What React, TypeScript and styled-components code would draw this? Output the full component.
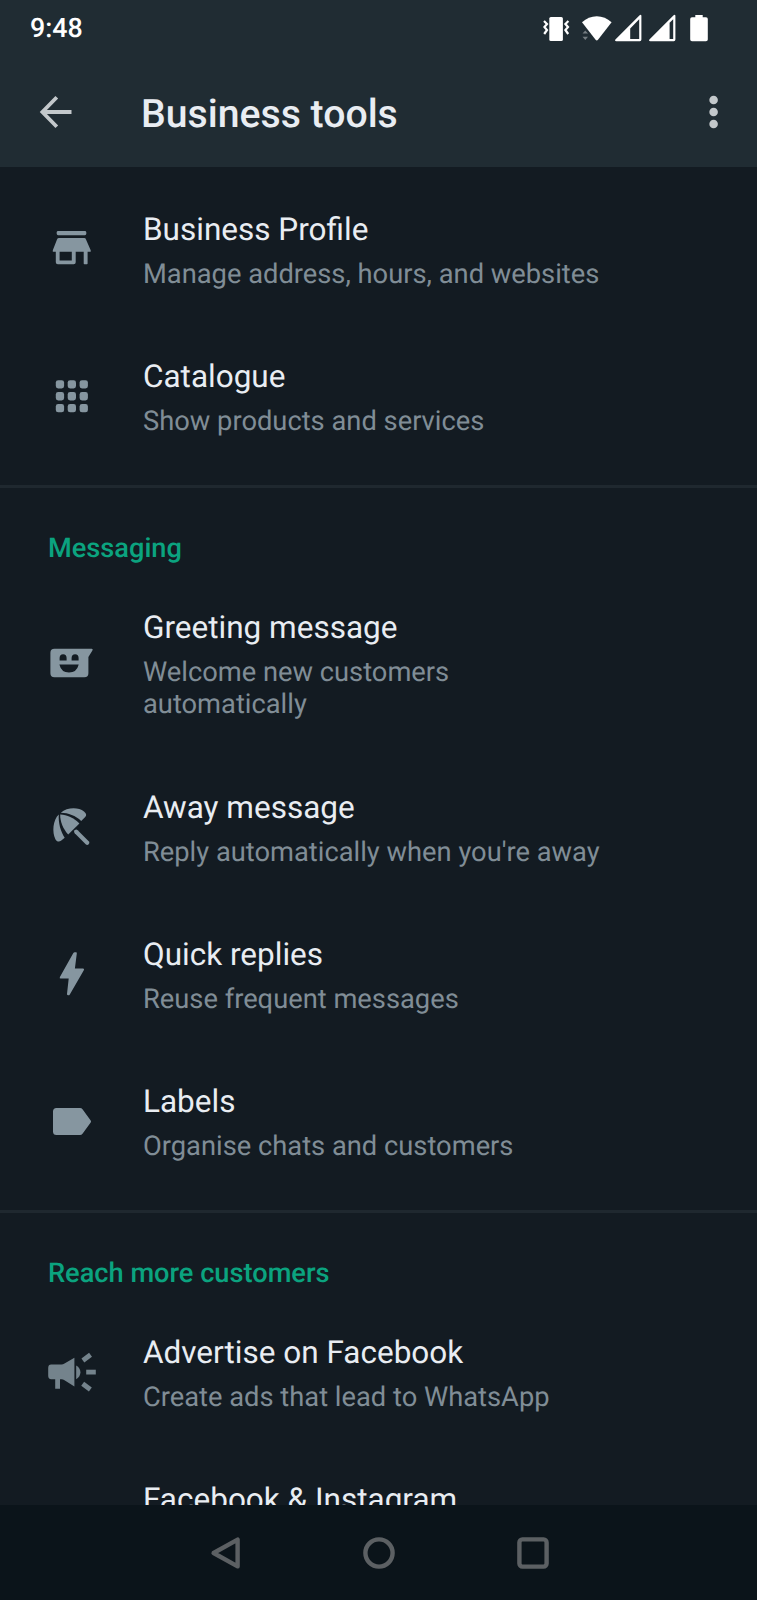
import React from "react";
import styled, { createGlobalStyle } from "styled-components";

const GlobalStyle = createGlobalStyle`
  * { box-sizing: border-box; }
  html, body { margin: 0; padding: 0; background: #131b22; }
  body {
    font-family: Roboto, "Noto Sans", sans-serif;
    text-rendering: geometricPrecision;
    overflow: hidden;
  }
`;

const Screen = styled.div`
  display: flex;
  flex-direction: column;
  width: 757px;
  height: 1600px;
  background: #131b22;
  overflow: hidden;
`;

const Header = styled.header`
  flex: none;
  height: 167px;
  background: #202c33;
`;

const StatusBar = styled.div`
  display: flex;
  justify-content: space-between;
  align-items: center;
  height: 56px;
  padding: 0 49px 0 30px;
`;

const Clock = styled.span`
  color: #fff;
  font-size: 26.8px;
  font-weight: 500;
  line-height: 56px;
`;

const StatusIcons = styled.div`
  display: flex;
  align-items: center;
`;

const StatusGlyph = styled.svg<{ $gap?: number }>`
  display: block;
  height: 28px;
  margin-left: ${(p) => p.$gap ?? 0}px;
  fill: #fff;
`;

const Toolbar = styled.div`
  display: flex;
  align-items: center;
  height: 111px;
  padding: 0 35px 0 38px;
`;

const ToolbarIcon = styled.svg`
  display: block;
  flex: none;
  fill: none;
  stroke: #c3c8cb;
`;

const Title = styled.h1`
  flex: 1;
  margin: 5px 0 0 68px;
  color: #e9edf2;
  font-size: 39.2px;
  font-weight: 500;
  line-height: 46px;
`;

const List = styled.main`
  flex: 1;
  min-height: 0;
  overflow: hidden;
`;

const Section = styled.section`
  padding: 8.5px 0 14.8px;
  & + & {
    border-top: 3px solid #1f282f;
    padding-top: 41px;
  }
`;

const SectionTitle = styled.h2`
  margin: 0 0 6.2px 48px;
  color: #0ba37f;
  font-size: 27.2px;
  font-weight: 500;
  line-height: 38px;
`;

const Row = styled.div`
  display: flex;
  align-items: center;
  padding: 35.5px 46px 32.5px 45.6px;
`;

const RowIcon = styled.svg`
  display: block;
  flex: none;
  width: 52px;
  height: 48px;
  margin-bottom: 3px;
  fill: #8696a0;
`;

const RowText = styled.div`
  align-self: flex-start;
  width: 470px;
  margin-left: 43.4px;
  padding-left: 2px;
`;

const RowTitle = styled.div`
  color: #e9edf2;
  font-size: 31.5px;
  line-height: 38px;
  white-space: nowrap;
`;

const RowDetail = styled.div`
  margin-top: 9px;
  color: #808d96;
  font-size: 27.3px;
  line-height: 32.4px;
`;

const NavBar = styled.nav`
  display: flex;
  flex: none;
  justify-content: center;
  align-items: center;
  gap: 114px;
  height: 95px;
  background: #0b141a;
`;

const NavIcon = styled.svg`
  display: block;
  width: 40px;
  height: 40px;
  fill: none;
  stroke: #5c6063;
  stroke-width: 4.4;
  stroke-linejoin: round;
`;

const StoreIcon = () => (
  <RowIcon viewBox="0 0 52 48">
    <rect x="10.7" y="6" width="29.6" height="4.2" rx="1.4" />
    <path d="M13 13H38.2Q39.6 13 40 14.4L44.7 25.2V26.8H41.6V38.6Q41.6 39.3 40.9 39.3H38.4Q37.7 39.3 37.7 38.6V26.8H29.7V37.3Q29.7 39.3 27.7 39.3H11.8Q9.8 39.3 9.8 37.3V26.8H6.8V25.2L11 14.4Q11.5 13 13 13ZM13.6 26.8V35.4H25.8V26.8Z" />
  </RowIcon>
);

const GridIcon = () => (
  <RowIcon viewBox="0 0 52 48">
    {[7.2, 19.1, 31].map((y) =>
      [9.8, 21.7, 33.6].map((x) => (
        <rect key={`${x}-${y}`} x={x} y={y} width="8.3" height="8.3" rx="2.4" />
      ))
    )}
  </RowIcon>
);

const GreetingIcon = () => (
  <RowIcon viewBox="0 0 52 48">
    <path
      fillRule="evenodd"
      d="M8.4 9.7H45.7Q47.4 9.9 46.4 11.6L42.4 18V34.3Q42.4 38.3 38.4 38.3H8.4Q4.4 38.3 4.4 34.3V13.7Q4.4 9.7 8.4 9.7ZM13.6 21.4H20.6V19Q20.6 15.2 17.1 15.2Q13.6 15.2 13.6 19ZM25.6 21.4H32.6V19Q32.6 15.2 29.1 15.2Q25.6 15.2 25.6 19ZM13.4 25.6Q15.2 33.6 23 33.6Q30.8 33.6 32.7 25.6Z"
    />
  </RowIcon>
);

const UmbrellaIcon = () => (
  <RowIcon viewBox="0 0 52 48">
    <path d="M12.8 11.6C6.8 17 6 29.5 9.4 36.2C10.6 38.8 13.2 39.2 15 37.8L18.7 34.8C14.6 28.5 12.2 20 12.8 11.6Z" />
    <path d="M14.2 11.4C20.5 11.3 28 14.8 33.4 20.4L22.2 31.4C17.2 26 14 18.5 14.2 11.4Z" />
    <path d="M14.8 9.8C21 4 32.5 4 38 8.4C40.4 10.2 40.8 12.4 39.2 13.9L35.2 18C29.8 12.8 22.2 9.8 14.8 9.8Z" />
    <path d="M30.2 28.7L41.2 39.7" stroke="#8696a0" strokeWidth="4.2" strokeLinecap="round" />
  </RowIcon>
);

const BoltIcon = () => (
  <RowIcon viewBox="0 0 52 48">
    <path d="M28.8 2.3H30Q31 2.3 30.8 3.6L28.9 18.6H37Q38.7 18.6 37.8 20.3L23.8 44.4Q23.3 45.3 22.3 45.3Q20.9 45.3 21 44L22.7 28.6H14.7Q13.2 28.6 13.9 27L27.2 3.3Q27.8 2.3 28.8 2.3Z" />
  </RowIcon>
);

const LabelIcon = () => (
  <RowIcon viewBox="0 0 52 48">
    <path d="M10.5 10H34Q35.6 10 36.5 11.3L44.7 22.4Q45.4 23.5 44.7 24.6L36.5 35.7Q35.6 37 34 37H10.5Q7 37 7 33.5V13.5Q7 10 10.5 10Z" />
  </RowIcon>
);

const MegaphoneIcon = () => (
  <RowIcon viewBox="0 0 52 48">
    <g fill="#74838c">
      <path d="M5.2 16.5H15.5Q17 16.5 18.5 15.6L28.4 9.8V38.4L18.5 32.2Q17 31.2 15.5 31.2H14V40.7H9.2V31.2H5.2Q2.2 31.2 2.2 27.8V19.9Q2.2 16.5 5.2 16.5Z" />
      <path d="M30.2 17.6Q34.4 20 34.4 24.3Q34.4 28.6 30.2 31.2Z" />
      <rect x="35.8" y="7.3" width="9.6" height="4.8" transform="rotate(-37 40.5 9.5)" />
      <rect x="40.2" y="21.7" width="9.6" height="4.8" />
      <rect x="35.8" y="36.2" width="9.6" height="4.8" transform="rotate(37 40.5 38.5)" />
    </g>
  </RowIcon>
);

type Item = { title: string; detail?: string; Icon?: React.FC };

const sections: { heading?: string; items: Item[] }[] = [
  {
    items: [
      { title: "Business Profile", detail: "Manage address, hours, and websites", Icon: StoreIcon },
      { title: "Catalogue", detail: "Show products and services", Icon: GridIcon },
    ],
  },
  {
    heading: "Messaging",
    items: [
      { title: "Greeting message", detail: "Welcome new customers automatically", Icon: GreetingIcon },
      { title: "Away message", detail: "Reply automatically when you're away", Icon: UmbrellaIcon },
      { title: "Quick replies", detail: "Reuse frequent messages", Icon: BoltIcon },
      { title: "Labels", detail: "Organise chats and customers", Icon: LabelIcon },
    ],
  },
  {
    heading: "Reach more customers",
    items: [
      { title: "Advertise on Facebook", detail: "Create ads that lead to WhatsApp", Icon: MegaphoneIcon },
      { title: "Facebook & Instagram" },
    ],
  },
];

const EmptyIcon = () => <RowIcon viewBox="0 0 52 48" />;

export default function App() {
  return (
    <Screen>
      <GlobalStyle />
      <Header>
        <StatusBar>
          <Clock>9:48</Clock>
          <StatusIcons>
            <StatusGlyph width="27" viewBox="0 0 27 28">
              <rect x="6.3" y="3" width="13.6" height="24" rx="1.6" />
              <path
                d="M1 7L4 10L1.4 13L4 16L1.2 20M25.4 7L22.4 10L25 13L22.4 16L25.2 20"
                fill="none"
                stroke="#fff"
                strokeWidth="2.2"
              />
            </StatusGlyph>
            <StatusGlyph $gap={12} width="30" viewBox="0 0 30 28">
              <path d="M0 8.3Q6.5 2.2 14.8 2.2Q23 2.2 29.6 8.3L16 25.7Q14.8 27.2 13.6 25.7Z" />
              <path d="M.5 19.6L3.3 16.5L6 19.6ZM.5 22.8H6L3.3 26Z" fill="#747c81" />
            </StatusGlyph>
            <StatusGlyph $gap={3} width="27" viewBox="0 0 27 28">
              <path fillRule="evenodd" d="M.4 25.6L24.6 1.2Q26.4 .2 26.4 2V25.6Q26.4 27.2 24.8 27.2H1.4Q-.6 27 .4 25.6ZM15.2 14.6V25H24.2V5.2Z" />
            </StatusGlyph>
            <StatusGlyph $gap={7} width="27" viewBox="0 0 27 28">
              <path fillRule="evenodd" d="M.4 25.6L24.6 1.2Q26.4 .2 26.4 2V25.6Q26.4 27.2 24.8 27.2H1.4Q-.6 27 .4 25.6ZM20.6 8.8V25H24.2V5.2Z" />
            </StatusGlyph>
            <StatusGlyph $gap={14} width="18" viewBox="0 0 18 28">
              <path d="M5.3 1H12.7V3.2H16Q17.8 3.2 17.8 5V25.4Q17.8 27.2 16 27.2H2Q.2 27.2 .2 25.4V5Q.2 3.2 2 3.2H5.3Z" />
            </StatusGlyph>
          </StatusIcons>
        </StatusBar>
        <Toolbar>
          <ToolbarIcon width="35" height="34" viewBox="0 0 35 34" strokeWidth="3.8">
            <path d="M18.8 2.2L4.4 17L18.8 31.8M4 17H33.5" />
          </ToolbarIcon>
          <Title>Business tools</Title>
          <ToolbarIcon width="17" height="34" viewBox="0 0 17 34" strokeWidth="0">
            <g fill="#c3c8cb">
              <circle cx="8.6" cy="5" r="4.3" />
              <circle cx="8.6" cy="17" r="4.3" />
              <circle cx="8.6" cy="29" r="4.3" />
            </g>
          </ToolbarIcon>
        </Toolbar>
      </Header>
      <List>
        {sections.map(({ heading, items }, i) => (
          <Section key={i}>
            {heading && <SectionTitle>{heading}</SectionTitle>}
            {items.map(({ title, detail, Icon = EmptyIcon }) => (
              <Row key={title}>
                <Icon />
                <RowText>
                  <RowTitle>{title}</RowTitle>
                  {detail && <RowDetail>{detail}</RowDetail>}
                </RowText>
              </Row>
            ))}
          </Section>
        ))}
      </List>
      <NavBar>
        <NavIcon viewBox="0 0 40 40">
          <path d="M32.6 6.6V33.4L8.6 20Z" />
        </NavIcon>
        <NavIcon viewBox="0 0 40 40">
          <circle cx="20" cy="20" r="13.6" />
        </NavIcon>
        <NavIcon viewBox="0 0 40 40">
          <rect x="6.4" y="6.4" width="27.2" height="27.2" rx="3" />
        </NavIcon>
      </NavBar>
    </Screen>
  );
}
